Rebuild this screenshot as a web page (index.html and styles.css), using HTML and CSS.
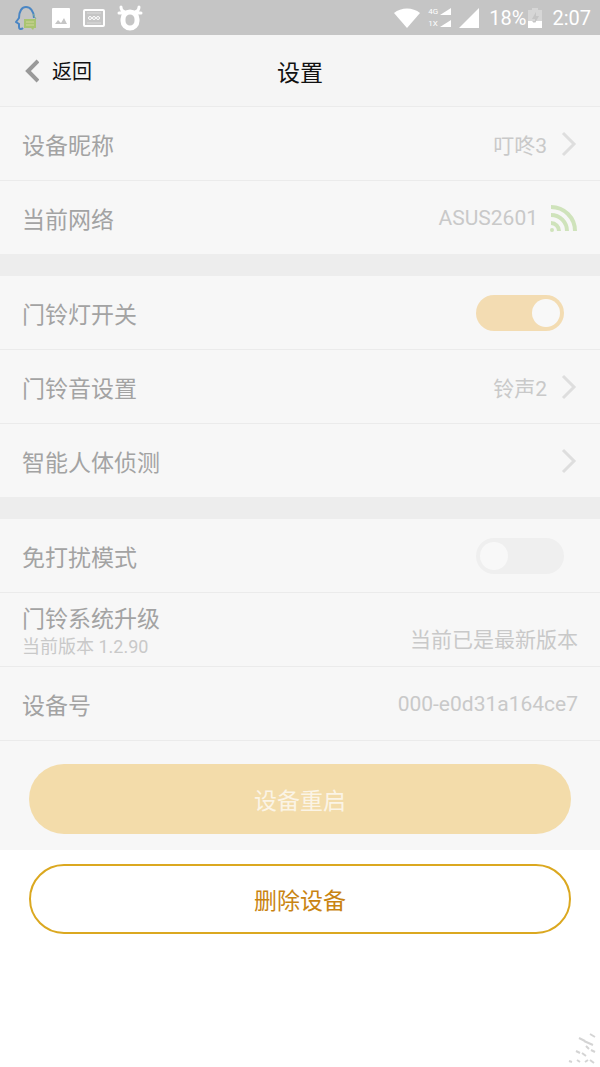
FILE: index.html
```html
<!DOCTYPE html>
<html lang="zh-CN">
<head>
    <meta charset="UTF-8">
    <meta name="viewport" content="width=device-width, initial-scale=1.0">
    <title>设置</title>
    <link rel="stylesheet" href="styles.css">
</head>
<body>
    <div class="status-bar">
        <div class="status-left">
            <svg width="24" height="26" viewBox="0 0 24 26" fill="none">
                <path d="M8 23c-2 2-4 1-4-1v-3L1 17l3-4C4 6 7 2 11 2s8 4 8 11" stroke="#4a86c4" stroke-width="2"/>
                <path d="M18 9l3 5" stroke="#7fae9a"/>
                <path d="M9 14h12v9h-2l-1 2-2-2H9z" fill="#a9c470"/>
                <path d="M11 17h8M11 20h8" stroke="#d2d49a"/>
            </svg>
            <svg width="20" height="20" viewBox="0 0 20 20">
                <path fill="#fff" fill-rule="evenodd" d="M1 1q0-1 1-1h16q1 0 1 1v18q0 1-1 1H2q-1 0-1-1zM4 16h12l-3-6-3 5-3-3z"/>
            </svg>
            <svg width="22" height="20" viewBox="0 0 22 20" fill="none" stroke="#fff">
                <rect x="1" y="2" width="20" height="16" rx="1" stroke-width="2"/>
                <path d="M4 5h14M4 15h14" stroke-opacity=".4"/>
                <circle cx="7" cy="10" r="1.500"/>
                <circle cx="11" cy="10" r="1.500"/>
                <circle cx="15" cy="10" r="1.500"/>
            </svg>
            <svg width="26" height="26" viewBox="0 0 26 26" fill="none" stroke="#fff" stroke-linecap="round">
                <rect x="6" y="7" width="14" height="16" rx="7" stroke-width="5"/>
                <path d="M4 2q0 4 4 5M22 2q0 4-4 5M2 8h5M19 8h5" stroke-width="3"/>
            </svg>
        </div>
        <div class="status-right">
            <svg width="26" height="20" viewBox="0 0 26 20">
                <path fill="#fff" d="M0 5C7-1 19-1 26 5L13 20z"/>
            </svg>
            <div class="sim-list">
                <div class="sim">4G <svg width="11" height="7" viewBox="0 0 11 7"><path fill="#fff" d="M0 7L11 0v7z"/></svg></div>
                <div class="sim">1X <svg width="11" height="7" viewBox="0 0 11 7"><path fill="#fff" d="M0 7L11 0v7z"/></svg></div>
            </div>
            <svg width="20" height="20" viewBox="0 0 20 20">
                <path fill="#fff" d="M0 20L20 0v20z"/>
            </svg>
            <div class="battery">
                <span>18%</span>
                <svg width="14" height="20" viewBox="0 0 14 20">
                    <path fill="#d6d6d6" d="M4 0h6v2h4v11H0V2h4z"/>
                    <path fill="#fff" d="M0 13h4l2 2 2-2h6v7H0z"/>
                    <path fill="#c5c5c5" d="M8 4l-4 7h3v4l4-7H8z"/>
                </svg>
            </div>
            <span>2:07</span>
        </div>
    </div>
    <header class="header">
        <a class="back" href="#">
            <svg width="17" height="26" viewBox="0 0 17 26" fill="none" stroke="#999" stroke-width="4">
                <path d="M16 3L6 13l10 10"/>
            </svg>
            返回
        </a>
        <h1 class="header-title">设置</h1>
    </header>
    <main class="settings">
        <section class="group">
            <a class="row" href="#">
                <span class="row-label">设备昵称</span>
                <span class="row-value">叮咚3</span>
                <svg class="chevron" viewBox="0 0 18 28"><path d="M3 3l11 11L3 25"/></svg>
            </a>
            <div class="row">
                <span class="row-label">当前网络</span>
                <span class="row-value">ASUS2601</span>
                <svg class="icon-wifi" width="28" height="28" viewBox="0 0 28 28" fill="none" stroke="#cfe3bb" stroke-width="4">
                    <path d="M1 3a24 24 0 0 1 24 24M1 11a16 16 0 0 1 16 16M1 19a8 8 0 0 1 8 8"/>
                    <circle cx="2" cy="26" r="1" stroke-width="2"/>
                </svg>
            </div>
        </section>
        <section class="group">
            <div class="row">
                <label class="row-label" for="light">门铃灯开关</label>
                <input class="switch" type="checkbox" id="light" checked>
            </div>
            <a class="row" href="#">
                <span class="row-label">门铃音设置</span>
                <span class="row-value">铃声2</span>
                <svg class="chevron" viewBox="0 0 18 28"><path d="M3 3l11 11L3 25"/></svg>
            </a>
            <a class="row" href="#">
                <span class="row-label">智能人体侦测</span>
                <svg class="chevron" viewBox="0 0 18 28"><path d="M3 3l11 11L3 25"/></svg>
            </a>
        </section>
        <section class="group">
            <div class="row">
                <label class="row-label" for="quiet">免打扰模式</label>
                <input class="switch" type="checkbox" id="quiet">
            </div>
            <div class="row">
                <div class="row-label">
                    <div class="upgrade-title">门铃系统升级</div>
                    <div class="upgrade-version">当前版本 1.2.90</div>
                </div>
                <span class="row-value upgrade-status">当前已是最新版本</span>
            </div>
            <div class="row">
                <span class="row-label">设备号</span>
                <span class="row-value">000-e0d31a164ce7</span>
            </div>
        </section>
        <div class="restart">
            <button class="btn btn-restart" type="button">设备重启</button>
        </div>
    </main>
    <div class="delete">
        <button class="btn btn-delete" type="button">删除设备</button>
    </div>
    <svg class="speckle" width="32" height="36" viewBox="0 0 32 36" fill="none" stroke="#d4d4d4">
        <path d="M22 5l5 3M11 9l6 3M16 12l9 4M18 17l3 3M23 21l4 2M8 22l4 2M14 24l4 3M1 32l3 1M9 31l3 2M17 33l3-2M22 31l4 3" stroke-width="2"/>
    </svg>
</body>
</html>
```

FILE: styles.css
```css
body {
    margin: 0;
    min-height: 100vh;
    position: relative;
    background-color: #fff;
    font-family: Roboto, "Noto Sans CJK SC", sans-serif;
    color: #a3a3a3;
}
a {
    color: inherit;
    text-decoration: none;
}
svg {
    flex-shrink: 0;
}
.status-bar {
    height: 35px;
    padding: 0 9px 0 15px;
    display: flex;
    justify-content: space-between;
    align-items: center;
    background-color: #c5c5c5;
    color: #fff;
    font-size: 20px;
}
.status-left,
.status-right {
    display: flex;
    align-items: center;
}
.status-left {
    gap: 12px;
}
.status-right {
    gap: 10px;
}
.sim-list {
    display: flex;
    flex-direction: column;
    gap: 2px;
    margin: 0 -2px;
}
.sim {
    display: flex;
    align-items: center;
    justify-content: space-between;
    gap: 2px;
    font-size: 8px;
    line-height: 10px;
}
.battery {
    display: flex;
    align-items: center;
    gap: 2px;
}
.header {
    height: 71px;
    padding: 0 22px;
    display: grid;
    grid-template-columns: 1fr auto 1fr;
    align-items: center;
    background-color: #f5f5f5;
    border-bottom: 1px solid #ebebeb;
    color: #111;
}
.back {
    display: flex;
    align-items: center;
    gap: 13px;
    font-size: 20px;
}
.header-title {
    margin: 0;
    font-size: 23px;
    font-weight: 400;
}
.settings {
    background-color: #f7f7f7;
}
.group {
    border-bottom: 22px solid #ededed;
}
.group:last-of-type {
    border-bottom: 1px solid #ebebeb;
}
.row {
    height: 73px;
    padding: 0 22px;
    display: flex;
    align-items: center;
}
.row + .row {
    border-top: 1px solid #ebebeb;
}
.row-label {
    flex: 1;
    font-size: 23px;
}
.row-value {
    font-size: 21px;
    color: #c9c9c9;
}
.chevron {
    width: 18px;
    height: 28px;
    margin-left: 13px;
    fill: none;
    stroke: #dedede;
    stroke-width: 3;
}
.icon-wifi {
    margin-left: 12px;
}
.switch {
    appearance: none;
    width: 88px;
    height: 36px;
    margin: 0 14px 0 0;
    padding: 4px;
    box-sizing: border-box;
    display: flex;
    border-radius: 18px;
    background-color: #efefef;
}
.switch::before {
    content: "";
    width: 28px;
    height: 28px;
    border-radius: 50%;
    background-color: #f8f8f8;
}
.switch:checked {
    justify-content: flex-end;
    background-color: #f3dcb2;
}
.upgrade-title {
    padding-top: 4px;
    line-height: 30px;
}
.upgrade-version {
    font-size: 18px;
    line-height: 24px;
    color: #c9c9c9;
}
.upgrade-status {
    padding-top: 16px;
}
.restart {
    padding: 23px 29px 16px;
}
.delete {
    padding: 14px 29px;
}
.btn {
    width: 100%;
    height: 70px;
    display: block;
    border: none;
    border-radius: 35px;
    font-family: inherit;
    font-size: 23px;
}
.btn-restart {
    background-color: #f3dcaa;
    color: #fbf4e6;
}
.btn-delete {
    background-color: #fff;
    border: 2px solid #dba820;
    color: #c98412;
}
.speckle {
    position: absolute;
    right: 0;
    bottom: 2px;
}
```
